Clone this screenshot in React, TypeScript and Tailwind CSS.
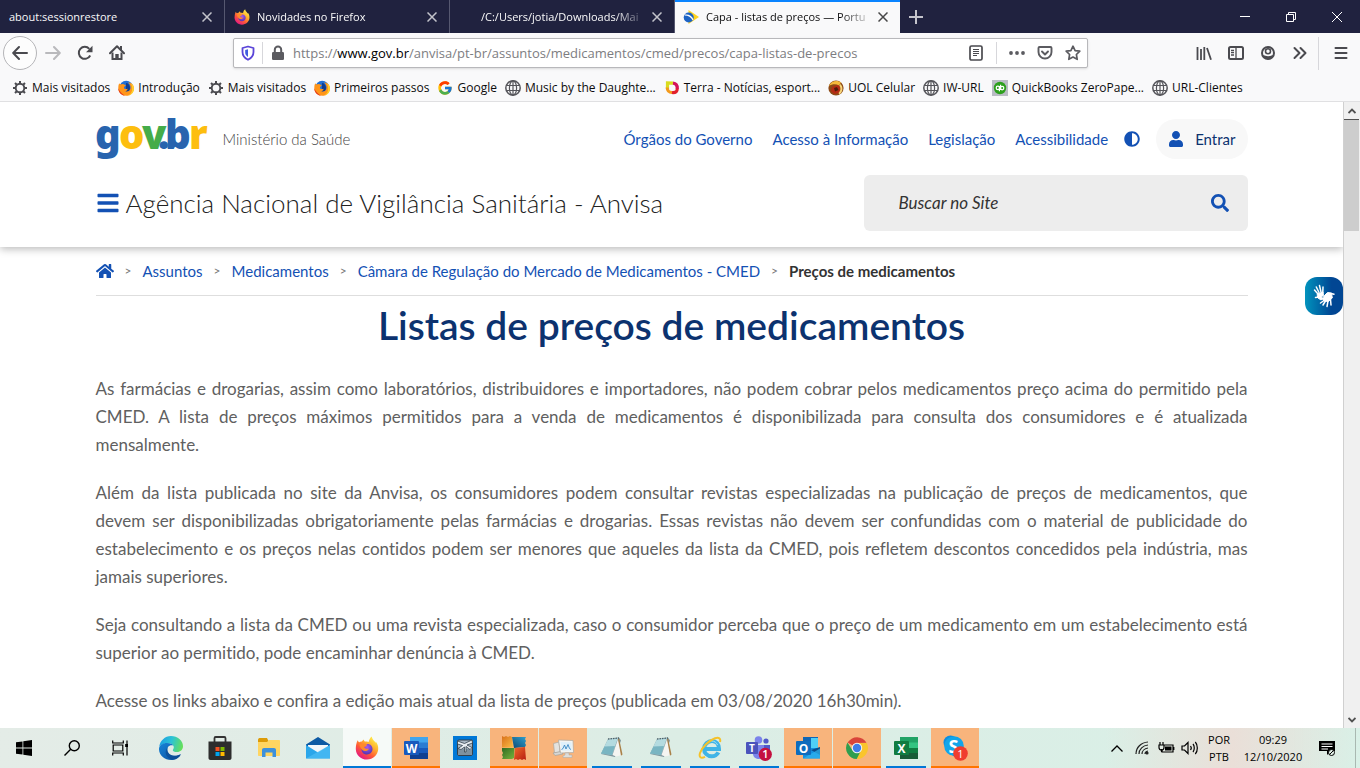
import { useState, type ReactNode } from "react";
import { FaAdjust, FaBars, FaHome, FaSearch, FaUser } from "react-icons/fa";
import { FcGoogle } from "react-icons/fc";

type TabItem = {
  title: string;
  icon?: ReactNode;
  indent?: boolean;
};

type Bookmark = {
  label: string;
  icon: ReactNode;
};

type TaskState = "idle" | "open" | "active" | "alert";

type TaskItem = {
  label: string;
  icon: ReactNode;
  state: TaskState;
};

function FirefoxIcon({ size, id }: { size: number; id: string }) {
  return (
    <svg width={size} height={size} viewBox="0 0 24 24" aria-hidden="true">
      <defs>
        <linearGradient id={`${id}-body`} x1="0.85" y1="0.05" x2="0.2" y2="0.95">
          <stop offset="0" stopColor="#fff44f" />
          <stop offset="0.35" stopColor="#ffb02e" />
          <stop offset="0.65" stopColor="#ff5a36" />
          <stop offset="1" stopColor="#e31587" />
        </linearGradient>
        <radialGradient id={`${id}-core`} cx="0.5" cy="0.3" r="0.8">
          <stop offset="0" stopColor="#a35bf0" />
          <stop offset="1" stopColor="#4b2fa8" />
        </radialGradient>
      </defs>
      <path
        fill={`url(#${id}-body)`}
        d="M2.6 4.2c.4 1 .9 1.700 1.700 2.100.6-.5 1.500-.8 2.500-.7.4-.9 1.200-1.700 2.200-2.200-.1 1 .3 1.700.9 2.200 1.600 0 2.700.1 3.700.5.4-2.300 1.400-4.300 3.200-5.600.1 2.400 1.600 3.500 2.900 5 .5.500.8 1 1 1.500.1-.5.1-.9 0-1.500 1.800 2.100 2.700 4.600 2.500 7.700-.4 5.800-5.200 10.300-11.200 10.300C5.700 23.500.9 18.900.8 12.900.8 9.700 1.400 7 2.600 4.200z"
      />
      <path
        fill={`url(#${id}-core)`}
        d="M11.500 8.200c3.400-.7 6 1.700 6 4.800 0 3.200-2.500 5.400-5.500 5.400-3.200 0-5.500-2.300-5.500-5 0-1 .3-1.800.9-2.500 1 .2 1.900.2 2.700-.2.900-.4 1.500-.9 1.500-1.500 0-.4 0-.7-.1-1z"
      />
      <path
        fill="#ff8a2b"
        d="M4.300 8.500c1.600-.9 4-.9 7.400-.3-.6.7-.9 1.200-2 1.600-.7.300-.8 1-.3 1.700.8 1.300 2.700 1.700 4.500.9-.7 1.800-2.300 2.700-4 2.600-2.700-.2-4.700-2.700-5.600-6.500z"
      />
    </svg>
  );
}

function OldFirefoxIcon() {
  return (
    <svg width="16" height="16" viewBox="0 0 16 16" aria-hidden="true">
      <circle cx="8.200" cy="7.500" r="6.800" fill="#1f6fd6" />
      <path fill="#123c8c" d="M8 3c2 0 4 2 4 5s-2 4-4 4z" />
      <path
        fill="#ff9518"
        d="M1.200 3.200c.3.700.8 1 1.300 1.300C4.400 3.400 6 4 6.500 4.700c1.100 0 1.300.6 1 1.100-.4.600-1.300.7-1.500 1.400C6 9 7.500 9.500 9.500 8.800c.2 1.500-1 2.500-2.500 2.500 3 1 5.600-.5 5.600-3.500 0-2.300-1-4-2.600-5.300C13.500 2.500 16 5 16 8.500c0 4-3.400 7.300-7.800 7.300S.3 12.500.3 8.300C.3 6.200.5 4.700 1.200 3.200z"
      />
      <path
        fill="#ffd52b"
        d="M12.500 3c2.300 1.400 3.500 3.500 3.400 5.900-.1 3.100-2.400 5.900-5.400 6.700 2.200-1.800 3.700-4 3.700-6.700 0-2.300-.4-4.200-1.700-5.900z"
      />
      <path fill="#e5371b" d="M.3 8.300C.2 12.500 3.500 15.300 7 15.700 4 14 1.500 11.500.3 8.300z" />
    </svg>
  );
}

function GearIcon() {
  return (
    <svg width="16" height="16" viewBox="0 0 16 16" fill="none" stroke="#4a4a4f" aria-hidden="true">
      <circle cx="8" cy="8" r="4.300" strokeWidth="1.900" />
      <path
        strokeWidth="2"
        d="M8 1v2.500M8 12.500V15M1 8h2.500M12.500 8H15M3 3l1.800 1.800M11.200 11.200L13 13M13 3l-1.800 1.800M4.800 11.200L3 13"
      />
    </svg>
  );
}

function GlobeIcon() {
  return (
    <svg width="16" height="16" viewBox="0 0 16 16" fill="none" stroke="#55555a" strokeWidth="1.200" aria-hidden="true">
      <circle cx="8" cy="8" r="7.200" strokeWidth="1.500" />
      <ellipse cx="8" cy="8" rx="3.600" ry="7.200" />
      <path d="M1.500 5.500h13M1.500 10.500h13M8 1v14" />
    </svg>
  );
}

function TerraIcon() {
  return (
    <svg width="16" height="16" viewBox="0 0 16 16" fill="none" strokeWidth="3.200" aria-hidden="true">
      <path stroke="#d9dc1f" d="M9 3.200L3.500 3v6" />
      <path stroke="#f39a1c" d="M3.200 7.500c.2 4 1.800 5 4.800 5" />
      <path stroke="#e2202c" d="M8 12.500c4 .3 5.300-.8 5.300-4.500" />
      <path stroke="#d4135a" d="M13.300 8.500c0-3-1-5-4.300-5.300" />
    </svg>
  );
}

function UolIcon() {
  return (
    <svg width="16" height="16" viewBox="0 0 16 16" aria-hidden="true">
      <circle cx="8" cy="8" r="7.600" fill="#8d4a16" />
      <path fill="#f5b93c" d="M.8 6C3 1 9-.5 13 2.500L11 5.500C8 3.500 4 4 .8 6z" />
      <path fill="#b52a14" d="M4 7l6-2 3 3-2 5-5 1-3-3z" />
      <path fill="#f7d67a" d="M12.500 4c3 3 2.500 8-1 10.500l-1-1.500c2-2 2.700-5 .8-7.500z" />
      <path fill="#4c1d0c" d="M6 8l3-1 1.500 3L7 11.500z" />
    </svg>
  );
}

function QuickBooksIcon() {
  return (
    <svg width="16" height="16" viewBox="0 0 16 16" aria-hidden="true">
      <path fill="#b9bcc4" d="M0 0h16v16H0z" />
      <circle cx="8" cy="8" r="6.200" fill="#2ca01c" />
      <g fill="none" stroke="#fff" strokeWidth="1.200">
        <circle cx="5.900" cy="7.900" r="1.700" />
        <circle cx="10.100" cy="8.100" r="1.700" />
        <path d="M7.400 6v5.200M8.600 4.800V10" />
      </g>
    </svg>
  );
}

function PortalIcon() {
  return (
    <svg width="16" height="16" viewBox="0 0 16 16" aria-hidden="true">
      <path fill="#ffd21f" d="M5.500 1L16 8 5.500 15z" />
      <circle cx="5.700" cy="8.500" r="5" fill="#1c63c4" />
      <path fill="#fff" d="M2 5.500c3.500-.5 7 1 8.500 5l-1 .8C8 8 5.500 6.500 1.500 6.500z" />
    </svg>
  );
}

const tabs: TabItem[] = [
  { title: "about:sessionrestore" },
  { title: "Novidades no Firefox", icon: <FirefoxIcon size={16} id="tab" /> },
  { title: "/C:/Users/jotia/Downloads/Mai", indent: true },
  { title: "Capa - listas de preços — Portu", icon: <PortalIcon /> },
];

const bookmarks: Bookmark[] = [
  { label: "Mais visitados", icon: <GearIcon /> },
  { label: "Introdução", icon: <OldFirefoxIcon /> },
  { label: "Mais visitados", icon: <GearIcon /> },
  { label: "Primeiros passos", icon: <OldFirefoxIcon /> },
  { label: "Google", icon: <FcGoogle size={16} /> },
  { label: "Music by the Daughte...", icon: <GlobeIcon /> },
  { label: "Terra - Notícias, esport...", icon: <TerraIcon /> },
  { label: "UOL Celular", icon: <UolIcon /> },
  { label: "IW-URL", icon: <GlobeIcon /> },
  { label: "QuickBooks ZeroPape...", icon: <QuickBooksIcon /> },
  { label: "URL-Clientes", icon: <GlobeIcon /> },
];

const siteLinks = [
  "Órgãos do Governo",
  "Acesso à Informação",
  "Legislação",
  "Acessibilidade",
];

const crumbs = [
  "Assuntos",
  "Medicamentos",
  "Câmara de Regulação do Mercado de Medicamentos - CMED",
];

const paragraphs = [
  "As farmácias e drogarias, assim como laboratórios, distribuidores e importadores, não podem cobrar pelos medicamentos preço acima do permitido pela CMED. A lista de preços máximos permitidos para a venda de medicamentos é disponibilizada para consulta dos consumidores e é atualizada mensalmente.\u00a0\u00a0",
  "Além da lista publicada no site da Anvisa, os consumidores podem consultar revistas especializadas na publicação de preços de medicamentos, que devem\u00a0ser disponibilizadas obrigatoriamente pelas farmácias e drogarias. Essas revistas não devem ser confundidas com o material de publicidade do estabelecimento e os preços nelas contidos podem ser menores que aqueles da lista da CMED, pois refletem descontos concedidos pela indústria, mas jamais superiores.",
  "Seja consultando a lista da CMED ou uma revista especializada, caso o consumidor perceba que o preço de um medicamento em um estabelecimento está superior ao permitido, pode encaminhar denúncia à CMED.",
  "Acesse os links abaixo e confira a edição mais atual da lista de preços (publicada em 03/08/2020 16h30min).",
];

function TabStrip() {
  const [active, setActive] = useState(3);

  return (
    <div className="flex h-[33px] shrink-0 bg-[#20223f] text-[11px] text-[#f9f9fa]">
      {tabs.map((tab, index) => (
        <div
          key={tab.title}
          className={
            index === active
              ? "flex w-[225px] items-center border-t-2 border-[#0a84ff] bg-[#f9f9fa] pr-2 pb-px pl-2 text-[#0c0c0d]"
              : "flex w-[225px] items-center border-r border-[#565870] pt-px pr-2 pl-[9px]"
          }
        >
          {tab.icon}
          <button
            type="button"
            onClick={() => setActive(index)}
            className={
              tab.indent
                ? "ml-[22px] min-w-0 flex-1 text-left whitespace-nowrap [mask-image:linear-gradient(to_right,black_80%,transparent)]"
                : tab.icon
                  ? "ml-[7px] min-w-0 flex-1 text-left whitespace-nowrap [mask-image:linear-gradient(to_right,black_80%,transparent)]"
                  : "min-w-0 flex-1 text-left whitespace-nowrap"
            }
          >
            {tab.title}
          </button>
          <button type="button" aria-label="Fechar aba" className="flex w-[18px] justify-center">
            <svg width="10" height="10" viewBox="0 0 10 10" stroke="currentColor" strokeWidth="1.500" opacity="0.75">
              <path d="M.5.5l9 9M9.500.5l-9 9" />
            </svg>
          </button>
        </div>
      ))}
      <button type="button" aria-label="Nova aba" className="flex w-8 items-center justify-center">
        <svg width="14" height="14" viewBox="0 0 14 14" stroke="#c4c4cc" strokeWidth="2">
          <path d="M7 0v14M0 7h14" />
        </svg>
      </button>
      <div className="ml-auto flex items-center">
        <button type="button" aria-label="Minimizar" className="flex w-[46px] justify-center">
          <svg width="10" height="10" viewBox="0 0 10 10" stroke="#fff">
            <path d="M0 4.500h10" />
          </svg>
        </button>
        <button type="button" aria-label="Restaurar" className="flex w-[46px] justify-center">
          <svg width="10" height="10" viewBox="0 0 10 10" fill="none" stroke="#fff">
            <path d="M.5 2.500h7v7h-7zM2.500 2.500v-2h7v7h-2" />
          </svg>
        </button>
        <button type="button" aria-label="Fechar" className="flex w-[46px] justify-center">
          <svg width="10" height="10" viewBox="0 0 10 10" stroke="#fff">
            <path d="M0 0l10 10M10 0L0 10" />
          </svg>
        </button>
      </div>
    </div>
  );
}

function ToolButton({ label, children }: { label: string; children: ReactNode }) {
  return (
    <button type="button" aria-label={label} className="flex h-8 w-8 shrink-0 items-center justify-center">
      <svg width="16" height="16" viewBox="0 0 16 16" fill="none" stroke="#4a4a4f" strokeWidth="2">
        {children}
      </svg>
    </button>
  );
}

function NavBar() {
  return (
    <div className="flex h-10 shrink-0 items-center bg-[#f9f9fa] px-[3px]">
      <button
        type="button"
        aria-label="Voltar"
        className="flex h-[34px] w-[34px] items-center justify-center rounded-full border border-[#b5b5b8] bg-[#fdfdfd]"
      >
        <svg width="16" height="16" viewBox="0 0 16 16" fill="none" stroke="#4a4a4f" strokeWidth="2" strokeLinecap="round" strokeLinejoin="round">
          <path d="M15 8H1.500M7 2L1.200 8 7 14" />
        </svg>
      </button>
      <ToolButton label="Avançar">
        <path stroke="#b9b9bc" strokeLinecap="round" strokeLinejoin="round" d="M1 8h13.500M9 2l5.800 6L9 14" />
      </ToolButton>
      <ToolButton label="Recarregar">
        <path d="M13.200 10.500A6 6 0 1 1 12.300 3.800" />
        <path fill="#4a4a4f" stroke="none" d="M15.500.8v6.500H9z" />
      </ToolButton>
      <ToolButton label="Página inicial">
        <path strokeLinejoin="round" strokeLinecap="round" d="M1 8.200L8 1.300l7 6.900" />
        <path d="M3.500 7.500V14h9V7.500" />
        <path fill="#4a4a4f" stroke="none" d="M6.300 9h3.400v5.500H6.300zM11 1h2v4h-2z" />
      </ToolButton>

      <div className="mx-[100px] flex h-[30px] flex-1 items-center rounded-xs border border-[#b8b8bb] bg-white shadow-sm">
        <svg className="ml-[7px] shrink-0" width="14" height="16" viewBox="0 0 14 16" fill="none" aria-hidden="true">
          <path stroke="#5a45d8" strokeWidth="1.800" strokeLinejoin="round" d="M7 1.500L1.500 3v4c0 3.500 2 6 5.500 7.800C10.500 13 12.500 10.500 12.500 7V3z" />
          <path fill="#3f5be0" d="M7 4.200L4.200 5v2.500c0 2 1 3.300 2.800 4.500z" />
        </svg>
        <span className="ml-[7px] h-[22px] w-px bg-[#d7d7db]" />
        <svg className="ml-2 shrink-0" width="14" height="16" viewBox="0 0 14 16" aria-hidden="true">
          <path fill="none" stroke="#5b5b60" strokeWidth="2" d="M3.800 7.500V4.700a3.200 3.200 0 0 1 6.400 0v2.800" />
          <rect x="1" y="7" width="12" height="8" rx="1.300" fill="#5b5b60" />
        </svg>
        {/* the host is emphasised, so the value is drawn as text under a transparent input */}
        <div className="relative ml-2 flex-1 pt-px text-[13px] whitespace-nowrap">
          <p aria-hidden="true" className="text-[#7d7d81]">
            https://<span className="text-black">www.gov.br</span>
            /anvisa/pt-br/assuntos/medicamentos/cmed/precos/capa-listas-de-precos
          </p>
          <input
            className="absolute inset-0 w-full bg-transparent text-transparent outline-none"
            aria-label="Endereço"
          />
        </div>
        <ToolButton label="Modo leitura">
          <rect x="2" y="1" width="12" height="14" rx="1.500" strokeWidth="1.700" />
          <path strokeWidth="1" d="M5 4.500h6M5 6.500h6M5 8.500h6M5 10.500h4" />
        </ToolButton>
        <span className="mx-1 h-[22px] w-px bg-[#d7d7db]" />
        <ToolButton label="Ações da página">
          <g fill="#5b5b60" stroke="none">
            <circle cx="2" cy="8" r="1.900" />
            <circle cx="8" cy="8" r="1.900" />
            <circle cx="14" cy="8" r="1.900" />
          </g>
        </ToolButton>
        <button type="button" aria-label="Salvar no Pocket" className="flex w-6 justify-center">
          <svg width="16" height="16" viewBox="0 0 16 16" fill="none" stroke="#5b5b60" strokeWidth="1.900" strokeLinecap="round" strokeLinejoin="round">
            <path d="M2.500 2h11c.7 0 1 .4 1 1v4a6.500 6.500 0 0 1-13 0V3c0-.6.400-1 1-1z" />
            <path d="M5 6.500l3 3 3-3" />
          </svg>
        </button>
        <button type="button" aria-label="Adicionar aos favoritos" className="mr-[2px] ml-1 flex w-6 justify-center">
          <svg width="16" height="16" viewBox="0 0 16 16" fill="none" stroke="#5b5b60" strokeWidth="1.700" strokeLinejoin="round">
            <path d="M8 1.200l2.100 4.400 4.700.6-3.400 3.300.8 4.800L8 12l-4.200 2.300.8-4.800L1.200 6.200l4.700-.6z" />
          </svg>
        </button>
      </div>

      <ToolButton label="Biblioteca">
        <path strokeWidth="1.800" d="M1.500 2v13M5 4v11M8.300 2v13M11 3l4 11.800" />
      </ToolButton>
      <ToolButton label="Barra lateral">
        <rect x="1" y="2" width="14" height="12" rx="1.500" />
        <path strokeWidth="1.300" d="M8 2v12M3 5.500h3M3 7.700h3M3 10h3" />
      </ToolButton>
      <ToolButton label="Conta">
        <circle cx="8" cy="8" r="6" />
        <circle cx="8" cy="6.300" r="2.500" strokeWidth="1.600" />
        <path fill="#4a4a4f" stroke="none" d="M3 10c3 1.500 7 1.500 10 0-1 3-3 4.300-5 4.300S4 13 3 10z" />
      </ToolButton>
      <ToolButton label="Mais ferramentas">
        <path strokeLinecap="round" strokeLinejoin="round" d="M2.500 3l5 5-5 5M8.500 3l5 5-5 5" />
      </ToolButton>
      <span className="mr-[6px] ml-[2px] h-[33px] w-px bg-[#d7d7db]" />
      <ToolButton label="Menu">
        <path strokeLinecap="round" d="M2.500 3h11M2.500 8h11M2.500 13h11" />
      </ToolButton>
    </div>
  );
}

function BookmarksBar() {
  return (
    <nav className="flex h-[29px] shrink-0 items-center gap-2 border-b border-[#e0e0e2] bg-[#f9f9fa] pt-px pl-3 text-xs text-[#0c0c0d]">
      {bookmarks.map((bookmark, index) => (
        <a key={index} href="#" className="flex items-center gap-1 whitespace-nowrap">
          {bookmark.icon}
          {bookmark.label}
        </a>
      ))}
    </nav>
  );
}

function GovLogo() {
  return (
    <svg
      className="overflow-visible"
      width="113"
      height="44"
      viewBox="0 0 113 44"
      role="img"
      aria-label="gov.br"
      fontFamily="'Noto Sans', sans-serif"
      fontWeight="900"
      fontSize="40"
    >
      <text y="32">
        <tspan x="-1" fill="#2864ae">g</tspan>
        <tspan x="23" fill="#fdbe0f">o</tspan>
        <tspan x="46" fill="#45ac49">v</tspan>
        <tspan x="62" fill="#2864ae">.</tspan>
        <tspan x="69" fill="#2864ae">b</tspan>
        <tspan x="93" fill="#fdbe0f">r</tspan>
      </text>
    </svg>
  );
}

function SiteHeader() {
  return (
    <header className="relative shadow-[0_2px_8px_rgba(0,0,0,0.28)]">
      <div className="mx-auto w-11/12 max-w-[1152px] pt-[15px] pb-4">
        <div className="flex items-center">
          <a href="#" className="shrink-0">
            <GovLogo />
          </a>
          <span className="ml-[14px] text-[15px] font-light text-[#444]">Ministério da Saúde</span>
          <nav className="ml-auto flex items-center gap-5 text-[15px] text-[#1351b4]">
            {siteLinks.map((link) => (
              <a key={link} href="#">
                {link}
              </a>
            ))}
          </nav>
          <button type="button" aria-label="Alto contraste" className="ml-4 text-[#1351b4]">
            <FaAdjust size={16} />
          </button>
          <button
            type="button"
            className="ml-4 flex h-10 items-center gap-[11px] rounded-full bg-[#f8f8f8] px-3 text-[15px] text-[#0c326f]"
          >
            <FaUser size={16} className="text-[#1351b4]" />
            Entrar
          </button>
        </div>
        <div className="mt-[14px] flex items-center">
          <button type="button" aria-label="Menu principal" className="text-[#1351b4]">
            <FaBars size={24} />
          </button>
          <h2 className="ml-[6px] text-[26px] font-light text-[#222]">
            Agência Nacional de Vigilância Sanitária - Anvisa
          </h2>
          <form className="ml-auto flex h-14 w-1/3 items-center rounded-md bg-[#ededed] pr-[19px]">
            <input
              id="site-search"
              type="search"
              aria-label="Buscar no Site"
              placeholder="Buscar no Site"
              className="min-w-0 flex-1 bg-transparent pl-[35px] text-[17px] italic outline-none placeholder:text-[#333]"
            />
            <button type="submit" aria-label="Buscar" className="text-[#1351b4]">
              <FaSearch size={18} />
            </button>
          </form>
        </div>
      </div>
    </header>
  );
}

function PageContent() {
  return (
    <main className="mx-auto w-11/12 max-w-[1152px]">
      <nav
        aria-label="Trilha"
        className="flex h-[49px] items-center gap-[11px] border-b border-[#dedede] text-[15px] text-[#1351b4]"
      >
        <a href="#" aria-label="Página inicial">
          <FaHome size={18} />
        </a>
        {crumbs.map((crumb) => (
          <span key={crumb} className="flex items-center gap-[11px]">
            <span className="text-xs text-[#777]">&gt;</span>
            <a href="#">{crumb}</a>
          </span>
        ))}
        <span className="text-xs text-[#777]">&gt;</span>
        <span className="font-bold text-[#333]">Preços de medicamentos</span>
      </nav>
      <h1 className="mt-[5px] text-center text-[39px] leading-12 font-semibold text-[#0c326f]">
        Listas de preços de medicamentos
      </h1>
      <div className="mt-[26px] flex flex-col gap-5 text-justify text-[17px] leading-7 text-[#606060] [font-variant-ligatures:none]">
        {paragraphs.map((paragraph) => (
          <p key={paragraph}>{paragraph}</p>
        ))}
      </div>
    </main>
  );
}

function Scrollbar() {
  return (
    <div className="flex w-[17px] shrink-0 flex-col border-l border-[#d0d0d0] bg-[#f0f0f0]">
      <button type="button" aria-label="Rolar para cima" className="flex h-[17px] items-center justify-center">
        <svg width="8" height="6" viewBox="0 0 8 6" fill="none" stroke="#505050" strokeWidth="1.800">
          <path d="M.5 5L4 1.500 7.500 5" />
        </svg>
      </button>
      <div className="mr-px h-[112px] border-t border-[#505050] bg-[#cdcdcd]" />
      <button type="button" aria-label="Rolar para baixo" className="mt-auto flex h-[17px] items-center justify-center">
        <svg width="8" height="6" viewBox="0 0 8 6" fill="none" stroke="#505050" strokeWidth="1.800">
          <path d="M.5 1L4 4.500 7.500 1" />
        </svg>
      </button>
    </div>
  );
}

function HandsIcon() {
  return (
    <svg width="24" height="24" viewBox="0 0 24 24" fill="none" stroke="#fff" strokeLinecap="round" aria-hidden="true">
      <path strokeWidth="1.500" d="M6 10L2.500 6M7 8.500L4.300 3M9 8L7.500 1.500M10.800 8.500l.2-5.500M7 13l-3.500.5" />
      <path fill="#fff" strokeWidth="1" d="M5.500 10l5.500-2 .5 3.500L9 13l2 1.500-2 1.500-3-2z" />
      <path fill="#fff" strokeWidth="1" d="M12.500 11.500l3-3 4 .5.800 5-4 3.500-4.300-.5-1.500-2z" />
      <path strokeWidth="1.500" d="M19 9.500l3 .7M12 16.500L8.500 19M13.500 17l-2.500 4M16 17l-1 5.500M18.500 15.500l.5 5.500" />
    </svg>
  );
}

function EdgeIcon() {
  return (
    <svg width="24" height="24" viewBox="0 0 24 24" aria-hidden="true">
      <defs>
        <linearGradient id="edge-top" x1="0" y1="0.3" x2="1" y2="0.5">
          <stop offset="0" stopColor="#1b9de2" />
          <stop offset="0.5" stopColor="#2cc3d5" />
          <stop offset="1" stopColor="#66e05a" />
        </linearGradient>
        <linearGradient id="edge-low" x1="0" y1="0" x2="1" y2="1">
          <stop offset="0" stopColor="#1683d8" />
          <stop offset="1" stopColor="#0c4f9c" />
        </linearGradient>
      </defs>
      <path fill="url(#edge-top)" d="M.2 11C.9 4.700 6 0 12 0c6.600 0 12 4.500 12 10.200 0 3.400-2.600 5.800-6 5.800-2.600 0-4.200-.9-4.200-1.800 0-.7 1-1.200 1-2.900 0-2.200-2.300-4-5.300-4C5 7.300 1.200 9 .2 11z" />
      <path fill="url(#edge-low)" d="M0 12.500C.4 9.300 3.800 7 8 7c3.500 0 5.600 1 6.300 2.600-1-.7-4-.7-5.300 1.400C7 14.500 9.600 19.500 15 19.800c2.700.1 5-.7 6.800-1.600C20.500 21.700 16.700 24 12 24 5.500 24-.3 19 0 12.500z" />
      <path fill="#0b4a91" opacity="0.7" d="M9 11c-2 3.500.6 8.500 6 8.800 2.700.1 5-.7 6.800-1.600C20 22 16 23.500 12.500 23.300 7 22 4.500 15.500 9 11z" />
    </svg>
  );
}

function StoreIcon() {
  return (
    <svg width="24" height="24" viewBox="0 0 24 24" aria-hidden="true">
      <path fill="none" stroke="#333" strokeWidth="1.800" d="M6.500 6V2.200c0-.7.400-1.200 1.200-1.200h8.600c.8 0 1.200.5 1.200 1.200V6" />
      <path fill="#2d2d2d" d="M.5 5.500h23V22c0 1.200-.8 2-2 2h-19c-1.200 0-2-.8-2-2z" />
      <path fill="#f25022" d="M7.500 11h4v4h-4z" />
      <path fill="#7fba00" d="M12.500 11h4v4h-4z" />
      <path fill="#00a4ef" d="M7.500 16h4v4h-4z" />
      <path fill="#ffb900" d="M12.500 16h4v4h-4z" />
    </svg>
  );
}

function ExplorerIcon() {
  return (
    <svg width="24" height="24" viewBox="0 0 24 24" aria-hidden="true">
      <path fill="#dd9b08" d="M1 4c0-1 .5-2 1.500-2H10l1.500 3L10 8H1z" />
      <path fill="#ffd561" d="M1 6h9l2-2h10c.6 0 1 .4 1 1v14c0 .6-.4 1-1 1H2c-.6 0-1-.4-1-1z" />
      <path fill="#3d91dc" d="M5 21v-7c0-1.200.8-2 2-2h10c1.200 0 2 .8 2 2v7h-3.500v-4.500h-7V21z" />
    </svg>
  );
}

function MailIcon() {
  return (
    <svg width="24" height="24" viewBox="0 0 24 24" aria-hidden="true">
      <path fill="#0c59a4" d="M0 8.500L12 1l12 7.500V13H0z" />
      <path fill="#f2f6fa" d="M2 9h20v6l-10 4L2 13z" />
      <path fill="#2ba6ea" d="M0 9l12 7.500L24 9v13.500H0z" />
      <path fill="#4dbdf5" d="M24 9L0 22.500h24z" opacity="0.7" />
    </svg>
  );
}

function OfficeIcon({ letter, dark, colors }: { letter: string; dark: string; colors: string[] }) {
  return (
    <svg width="24" height="24" viewBox="0 0 24 24" aria-hidden="true">
      <path fill={colors[0]} d="M6 1h18v6H6z" />
      <path fill={colors[1]} d="M6 6.500h18V12H6z" />
      <path fill={colors[2]} d="M6 12h18v5.500H6z" />
      <path fill={colors[3]} d="M6 17h18v6H6z" />
      <rect y="5" width="15" height="14" rx="1" fill={dark} />
      <text x="7.500" y="16.500" textAnchor="middle" fill="#fff" fontSize="12" fontWeight="700" fontFamily="'Open Sans', sans-serif">
        {letter}
      </text>
    </svg>
  );
}

function OutlookIcon() {
  return (
    <svg width="24" height="24" viewBox="0 0 24 24" aria-hidden="true">
      <path fill="#1066b5" d="M7 1h15v7H7z" />
      <path fill="#32a9e7" d="M7 6h8v8H7z" />
      <path fill="#50d0f7" d="M15 2h7v11h-7z" />
      <path fill="#1490df" d="M7 12h17v10.500H7z" />
      <path fill="#0a4c8b" d="M24 11v8l-9-5z" />
      <path fill="#2fb5ee" d="M7 22.500l17-10v10z" opacity="0.7" />
      <rect y="5" width="15" height="14" rx="1" fill="#0f6cbd" />
      <text x="7.500" y="16.500" textAnchor="middle" fill="#fff" fontSize="12" fontWeight="700" fontFamily="'Open Sans', sans-serif">
        O
      </text>
    </svg>
  );
}

function GiftIcon() {
  return (
    <svg width="24" height="24" viewBox="0 0 24 24" fill="none" aria-hidden="true">
      <path fill="#0078d7" d="M0 0h24v24H0z" />
      <rect x="4.500" y="4" width="15" height="15.500" rx="1.500" fill="#a9b7c3" stroke="#33414d" />
      <path fill="#7f919f" d="M5 13h14v4c0 1-.5 2-1.500 2h-11C5.500 19 5 18 5 17z" />
      <path fill="#e8edf1" stroke="#33414d" strokeWidth="0.800" d="M4.500 5l7 2.500L19 4l.5 3-5.500 2 5 2.500-2 2-4-3v5.500h-1.500V11L8 13.500l-3-1 4.500-3-5-1.500z" />
    </svg>
  );
}

function AntivirusIcon() {
  return (
    <svg width="24" height="24" viewBox="0 0 24 24" aria-hidden="true">
      <defs>
        <linearGradient id="av-orange" x1="0" y1="0" x2="1" y2="1">
          <stop offset="0" stopColor="#d9701a" />
          <stop offset="1" stopColor="#f9bd45" />
        </linearGradient>
        <linearGradient id="av-blue" x1="0" y1="1" x2="1" y2="0">
          <stop offset="0" stopColor="#0a4a74" />
          <stop offset="1" stopColor="#2f9fce" />
        </linearGradient>
        <linearGradient id="av-green" x1="0" y1="0" x2="1" y2="1">
          <stop offset="0" stopColor="#2f6b22" />
          <stop offset="1" stopColor="#79b43c" />
        </linearGradient>
        <linearGradient id="av-red" x1="0" y1="0" x2="1" y2="1">
          <stop offset="0" stopColor="#ee6a2a" />
          <stop offset="1" stopColor="#b81c12" />
        </linearGradient>
      </defs>
      <path fill="url(#av-orange)" d="M0 0l2 1 2-1 2 1 2-1 2 1 1 10.500H0z" />
      <path fill="url(#av-green)" d="M0 12h12.500l-.5 10-2 1H0l1-2-1-2 1-2-1-2z" />
      <path fill="url(#av-blue)" d="M10 1h14l-1 2 1 2-1 2 1 2-1 2-11 1z" />
      <path fill="url(#av-red)" d="M13 12l10-1 1 13-2-1-2 1-2-1-2 1-2-1-2 1z" />
    </svg>
  );
}

function MonitorIcon() {
  return (
    <svg width="24" height="24" viewBox="0 0 24 24" aria-hidden="true">
      <path fill="#e4e3e0" stroke="#aaa7a1" strokeWidth="0.700" d="M2.500 7.500L8 6l1 10-5.500 1z" />
      <path fill="#d6d6d3" stroke="#a5a29c" strokeWidth="0.700" d="M2 17l8-1.500 2 2.500-8 1.500z" />
      <path fill="#f4f4f2" stroke="#aaa7a1" strokeWidth="0.700" d="M7.500 4l14.500.5.500 12-13 .5z" />
      <path fill="#dff0fa" d="M9.500 6l11 .3.300 8.200-9.800.3z" />
      <path fill="none" stroke="#3a88c4" strokeWidth="0.900" d="M10.500 13.500l1.500-1 1.500-3.500 1.500 4 2-4.500 1.500 4 1.500 1" />
      <path fill="#dededb" stroke="#aaa7a1" strokeWidth="0.500" d="M14 17h4v2h3v2.500h-9V20l2-1z" />
    </svg>
  );
}

function NotepadIcon() {
  return (
    <svg width="24" height="24" viewBox="0 0 24 24" aria-hidden="true">
      <path fill="#7f979f" d="M8 3l11-1.500 2 3L15 21 1 18z" />
      <path fill="#b4dbe0" d="M8 3l10-1-6 17L1 17.500z" />
      <path fill="#5fa5b5" d="M4.500 10.500L15 10l-3 9-11-1.500z" opacity="0.7" />
      <path fill="#f5f5f2" d="M18 3l4 16-6 1.500-3.500-1.500z" />
      <path fill="#a98149" d="M19 2l3.500 16.500-1.500 1.200L18 3z" />
      <path fill="none" stroke="#4d5f68" strokeWidth="1.300" d="M8 3l11-1" strokeDasharray="1.500 1" />
    </svg>
  );
}

function ExplorerLegacyIcon() {
  return (
    <svg width="24" height="24" viewBox="0 0 24 24" fill="none" aria-hidden="true">
      <path stroke="#3fb4e6" strokeWidth="4" d="M6 13h15c0-5-3-8-7-8s-8 3.500-8 8c0 4 3.500 7.300 7.500 7.300 3.500 0 5.500-1.500 6.800-4" />
      <path stroke="#a6e2f8" strokeWidth="1" d="M6.500 11c1-4 4-6 7-6s5 1.500 6 4" />
      <path stroke="#f5c22b" strokeWidth="2" d="M22 6c1-3.500-1-5-5-3.700C11 4.500 4 11 2 17c-1.200 4 .7 6 5 3.800" />
    </svg>
  );
}

function TeamsIcon() {
  return (
    <svg width="26" height="26" viewBox="0 0 26 26" aria-hidden="true">
      <circle cx="12.500" cy="5" r="3.800" fill="#7b83eb" />
      <circle cx="20" cy="6" r="2.600" fill="#5059c9" />
      <path fill="#7b83eb" d="M7 10h12v9c0 3-3 5-6 5s-6-2-6-5z" />
      <path fill="#5059c9" d="M18 10h6v7c0 3-3 4-6 3z" />
      <rect y="7" width="12" height="12" rx="1" fill="#4b53bc" />
      <text x="6" y="16.500" textAnchor="middle" fill="#fff" fontSize="10" fontWeight="700" fontFamily="'Open Sans', sans-serif">
        T
      </text>
      <circle cx="19.300" cy="19.300" r="6.600" fill="#c4103f" />
      <text x="19.300" y="23.300" textAnchor="middle" fill="#fff" fontSize="11" fontWeight="600" fontFamily="'Open Sans', sans-serif">
        1
      </text>
    </svg>
  );
}

function ChromeIcon() {
  return (
    <svg width="24" height="24" viewBox="0 0 24 24" aria-hidden="true">
      <path fill="#d9453a" d="M12 12L2.600 6.500A11 11 0 0 1 21.500 6.800L12 7z" />
      <path fill="#fac52d" d="M12 12l.5-5h9.300A11 11 0 0 1 11.800 23z" />
      <path fill="#2f9e4f" d="M12 12l4 2.500L11.700 23A11 11 0 0 1 2.500 6.500l5 8z" />
      <circle cx="12" cy="12" r="5.200" fill="#f4f6f5" />
      <circle cx="12" cy="12" r="4.200" fill="#3f7de8" />
    </svg>
  );
}

function SkypeIcon() {
  return (
    <svg width="26" height="26" viewBox="0 0 26 26" aria-hidden="true">
      <circle cx="8.500" cy="7.500" r="7" fill="#0d8ee0" />
      <circle cx="15" cy="15" r="7" fill="#0a7bd0" />
      <circle cx="12" cy="11" r="9.800" fill="#12a5ea" />
      <text x="11.500" y="17.500" textAnchor="middle" fill="#fff" fontSize="18" fontWeight="700" fontFamily="'Open Sans', sans-serif">
        S
      </text>
      <circle cx="18.500" cy="18.500" r="7.300" fill="#f03d2f" />
      <text x="18.500" y="22.500" textAnchor="middle" fill="#fff" fontSize="11" fontFamily="'Open Sans', sans-serif">
        1
      </text>
    </svg>
  );
}

const taskItems: TaskItem[] = [
  { label: "Microsoft Edge", icon: <EdgeIcon />, state: "idle" },
  { label: "Microsoft Store", icon: <StoreIcon />, state: "idle" },
  { label: "Explorador de Arquivos", icon: <ExplorerIcon />, state: "idle" },
  { label: "Email", icon: <MailIcon />, state: "idle" },
  { label: "Firefox", icon: <FirefoxIcon size={24} id="task" />, state: "active" },
  {
    label: "Word",
    icon: <OfficeIcon letter="W" dark="#185abd" colors={["#41a5ee", "#2b7cd3", "#185abd", "#103f91"]} />,
    state: "alert",
  },
  { label: "Jogos", icon: <GiftIcon />, state: "idle" },
  { label: "Antivírus", icon: <AntivirusIcon />, state: "alert" },
  { label: "Monitor", icon: <MonitorIcon />, state: "alert" },
  { label: "Bloco de notas", icon: <NotepadIcon />, state: "open" },
  { label: "Bloco de notas 2", icon: <NotepadIcon />, state: "open" },
  { label: "Internet Explorer", icon: <ExplorerLegacyIcon />, state: "open" },
  { label: "Teams", icon: <TeamsIcon />, state: "open" },
  { label: "Outlook", icon: <OutlookIcon />, state: "alert" },
  { label: "Chrome", icon: <ChromeIcon />, state: "alert" },
  {
    label: "Excel",
    icon: <OfficeIcon letter="X" dark="#107c41" colors={["#21a366", "#33c481", "#107c41", "#185c37"]} />,
    state: "open",
  },
  { label: "Skype", icon: <SkypeIcon />, state: "alert" },
];

const taskStyles: Record<TaskState, string> = {
  idle: "",
  open: "",
  active: "bg-[#f6faf8]",
  alert: "bg-[#f8b47c]",
};

const lineStyles: Record<TaskState, string> = {
  idle: "h-[2px]",
  open: "mx-1 h-[2px] bg-[#0078d7]",
  active: "h-[2px] bg-[#0078d7]",
  alert: "h-[2px] bg-[#ff7400]",
};

function Taskbar() {
  return (
    <footer className="flex h-10 shrink-0 bg-linear-to-r from-[#e4ece7] via-[#dcede5] to-[#d9f0e7]">
      <button type="button" aria-label="Iniciar" className="flex w-12 items-center justify-center">
        <svg width="16" height="16" viewBox="0 0 16 16">
          <path d="M0 2.300L6.500 1.400v6.200H0zM7.300 1.300L16 0v7.600H7.300zM0 8.400h6.500v6.200L0 13.700zM7.300 8.400H16V16l-8.700-1.300z" />
        </svg>
      </button>
      <button type="button" aria-label="Pesquisar" className="flex w-12 items-center justify-center">
        <svg width="16" height="16" viewBox="0 0 16 16" fill="none" stroke="#000" strokeWidth="1.400">
          <circle cx="10.300" cy="5.700" r="5" />
          <path d="M6.700 9.300L.5 15.500" />
        </svg>
      </button>
      <button type="button" aria-label="Visão de tarefas" className="mr-[3px] flex w-12 items-center justify-center">
        <svg width="16" height="16" viewBox="0 0 16 16" fill="none" stroke="#000" strokeWidth="1.200">
          <path d="M.7.500v2.500h10.600V.5M.7 15.500V13h10.600v2.500M1.200 5h9.600v6H1.200zM15 .5v15" />
          <path fill="#000" d="M13.800 4.500h2v2h-2z" />
        </svg>
      </button>
      <div className="flex gap-px">
        {taskItems.map((item) => (
          <button
            key={item.label}
            type="button"
            aria-label={item.label}
            className={`flex w-12 flex-col ${taskStyles[item.state]}`}
          >
            <span className="flex flex-1 items-center justify-center self-stretch pt-px">{item.icon}</span>
            <span className={`self-stretch ${lineStyles[item.state]}`} />
          </button>
        ))}
      </div>
      <div className="ml-auto flex items-center bg-linear-to-r from-transparent via-[#eadfd8] to-transparent text-[11px] text-black">
        <button type="button" aria-label="Ícones ocultos" className="flex w-6 justify-center">
          <svg width="12" height="7" viewBox="0 0 12 7" fill="none" stroke="#000" strokeWidth="1.300">
            <path d="M.5 6.500L6 1l5.500 5.500" />
          </svg>
        </button>
        <svg className="ml-[6px]" width="15" height="14" viewBox="0 0 15 14" fill="none" stroke="#222" strokeWidth="1.200">
          <path d="M1 13C1 6.500 6 1.500 13 1M4 13c0-5 4-8.500 9-9M7 13c0-3 2.500-5.500 6-6M10 13c0-1.500 1-2.700 3-3" />
          <circle cx="12" cy="12" r="1" fill="#000" />
        </svg>
        <svg className="ml-2" width="17" height="12" viewBox="0 0 17 12" fill="none" stroke="#000" strokeWidth="1.200">
          <path d="M6 3h9v7H4V8M15.800 5v3M1 3h5v2.500a2 2 0 0 1-5 0zM2 0v3M5 0v3M3.500 7v3" />
          <path fill="#000" stroke="none" d="M7 4.500h6.500v4H7z" />
        </svg>
        <svg className="ml-[6px]" width="17" height="14" viewBox="0 0 17 14" fill="none" stroke="#000" strokeWidth="1.200">
          <path d="M1 5h2.500L7 1.500v11L3.500 9H1z" />
          <path d="M9.500 5c.8 1 .8 3 0 4M12 3c1.700 2 1.700 6 0 8M14.300 1c2.700 3 2.700 9 0 12" />
        </svg>
        <div className="w-[42px] text-center leading-[17px]">
          <p>POR</p>
          <p>PTB</p>
        </div>
        <div className="w-[66px] text-center leading-[17px]">
          <p>09:29</p>
          <p>12/10/2020</p>
        </div>
        <button type="button" aria-label="Central de ações" className="mr-[19px] ml-[13px] flex">
          <svg width="17" height="17" viewBox="0 0 17 17">
            <path d="M0 1h16v10h-4l-4 4v-4H0z" />
            <path stroke="#fff" strokeWidth="1.200" d="M2.500 4h11M2.500 6.500h11M2.500 9H9" />
            <circle cx="12.500" cy="12.500" r="3" fill="#e0eee6" stroke="#000" />
            <path stroke="#000" d="M10.500 14.500l4-4" />
          </svg>
        </button>
        <span className="mr-1 h-10 w-px bg-[#a9b8b1]" />
      </div>
    </footer>
  );
}

export default function App() {
  return (
    <div className="flex h-screen flex-col overflow-hidden bg-white font-['Open_Sans','Noto_Sans',sans-serif]">
      <TabStrip />
      <NavBar />
      <BookmarksBar />
      <div className="relative flex min-h-0 flex-1">
        <div className="min-w-0 flex-1 overflow-hidden font-['Lato',sans-serif]">
          <SiteHeader />
          <PageContent />
        </div>
        <button
          type="button"
          aria-label="Libras"
          className="absolute top-[175px] right-[17px] flex h-[38px] w-[38px] items-center justify-center rounded-xl bg-linear-to-r from-[#0493bd] to-[#014693] to-70% text-white"
        >
          <HandsIcon />
        </button>
        <Scrollbar />
      </div>
      <Taskbar />
    </div>
  );
}
